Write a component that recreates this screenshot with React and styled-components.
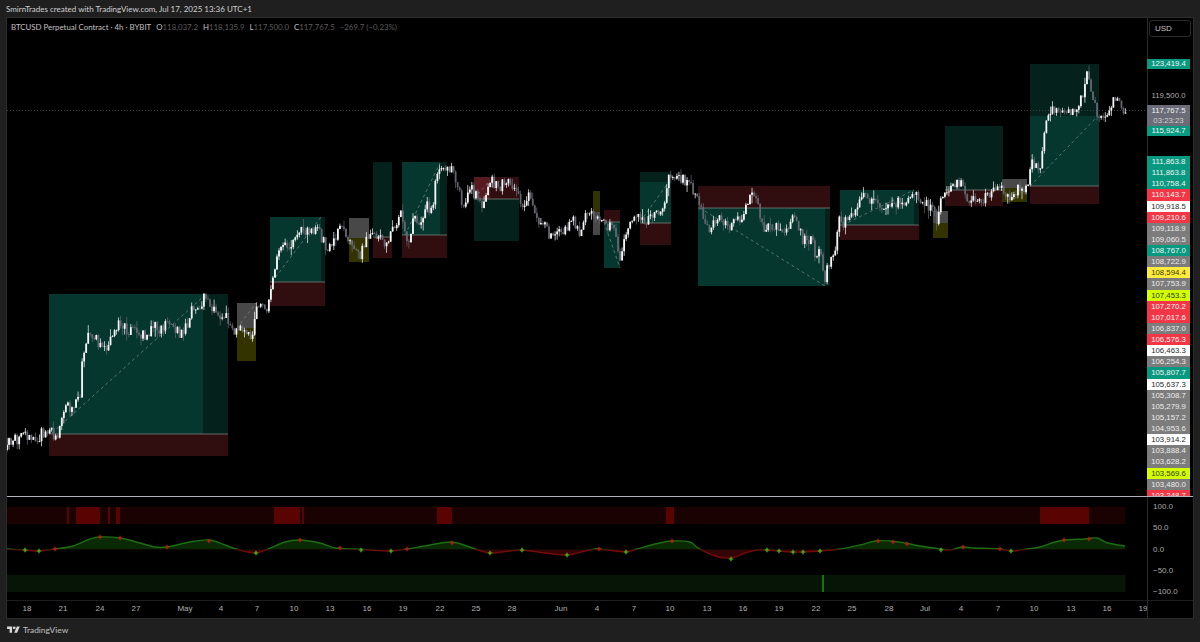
import React, { useMemo } from 'react';
import styled, { createGlobalStyle } from 'styled-components';

const GlobalStyle = createGlobalStyle`
	html, body {
		margin: 0;
		padding: 0;
		background: #1f1f1f;
	}
`;

const Page = styled.div`
	width: 1200px;
	height: 642px;
	display: flex;
	flex-direction: column;
	overflow: hidden;
	background: #1f1f1f;
	font-family: Lato, "Liberation Sans", sans-serif;
`;

const Header = styled.div`
	height: 17px;
	line-height: 18px;
	padding-left: 6px;
	font-size: 8px;
	color: #d0d0d0;
	white-space: nowrap;
`;

const Frame = styled.div`
	width: 1186px;
	margin-left: 6px;
	border: 1px solid #2c2c2c;
	display: grid;
	grid-template-columns: 1140px 46px;
	grid-template-rows: 478px 1px 104px 17px;
	background: #000;
`;

const PricePane = styled.div`
	position: relative;
	height: 478px;
	overflow: hidden;
`;

const Legend = styled.div`
	position: absolute;
	left: 4px;
	top: 3px;
	display: flex;
	gap: 5px;
	font-size: 7.85px;
	line-height: 12px;
	color: #c0c0c0;
	white-space: nowrap;
`;

const Ohlc = styled.span`
	color: #c0c0c0;
`;

const Dim = styled.span`
	color: #5c5c5c;
`;

const PriceScale = styled.div`
	display: flex;
	flex-direction: column;
	height: 478px;
	overflow: hidden;
	box-shadow: inset 1px 0 0 #2a2a2a;
`;

const CurrencyButton = styled.div`
	flex: none;
	width: 42px;
	height: 17px;
	margin: 2px 0 0 2px;
	box-sizing: border-box;
	border: 1px solid #2b2b2b;
	border-radius: 3px;
	padding-left: 5px;
	font-family: "Liberation Sans", sans-serif;
	font-size: 8px;
	line-height: 15px;
	color: #c4c4c4;
`;

const PriceTag = styled.div`
	flex: none;
	width: 43px;
	height: ${(p) => p.$height}px;
	margin-top: ${(p) => p.$gap || 0}px;
	text-align: center;
	font-family: "Liberation Sans", sans-serif;
	font-size: 7.8px;
	line-height: ${(p) => p.$height}px;
	background: ${(p) => p.$bg || 'transparent'};
	color: ${(p) => p.$fg || '#e6e6e6'};
`;

const PriceStack = styled.div`
	flex: none;
	margin-top: 20px;
`;

const CurrentTag = styled.div`
	flex: none;
	width: 43px;
	height: 21px;
	margin-top: 4px;
	background: #6a6d78;
	text-align: center;
	font-family: "Liberation Sans", sans-serif;
	font-size: 7.8px;
	line-height: 10px;
	padding-top: 0.5px;
	box-sizing: border-box;
	color: #f0f0f0;
`;

const Countdown = styled.div`
	color: #d0d0d0;
`;

const Separator = styled.div`
	grid-column: 1 / 3;
	background: #b4b4c0;
`;

const IndicatorPane = styled.div`
	height: 104px;
	border-bottom: 1px solid #1d1d1d;
	box-sizing: border-box;
`;

const IndicatorScale = styled.div`
	border-left: 1px solid #2a2a2a;
	border-bottom: 1px solid #1d1d1d;
	box-sizing: border-box;
	height: 104px;
	padding: 5px 0 3px 5px;
	display: flex;
	flex-direction: column;
	justify-content: space-between;
	font-family: "Liberation Sans", sans-serif;
	font-size: 8px;
	line-height: 10px;
	color: #a8a8a8;
`;

const TimeAxis = styled.div`
	position: relative;
	height: 17px;
	overflow: hidden;
	font-family: "Liberation Sans", sans-serif;
	font-size: 8px;
	line-height: 16px;
	color: #b0b0b0;
`;

const TimeTick = styled.span`
	position: absolute;
	top: 0;
	transform: translateX(-50%);
`;

const AxisCorner = styled.div`
	border-left: 1px solid #2a2a2a;
`;

const Footer = styled.div`
	flex: 1;
	display: flex;
	align-items: center;
	gap: 3px;
	padding: 0 0 2px 7px;
	font-size: 8.4px;
	color: #c0c0c0;
`;

const Svg = styled.svg`
	display: block;
`;

// closing price line, traced by hand in page coordinates
const PRICE_PATH = [
	[7, 450], [10, 440], [17, 440], [23, 435], [35, 442], [43, 432], [52, 433], [58, 443], [63, 407], [70, 408],
	[80, 395], [82, 363], [88, 335], [97, 340], [104, 352], [113, 338], [120, 322], [130, 332], [135, 330], [148, 337],
	[153, 323], [157, 330], [168, 323], [173, 328], [180, 333], [188, 323], [192, 308], [202, 305], [203, 297], [213, 310],
	[230, 320], [235, 332], [243, 330], [252, 335], [257, 307], [267, 307], [272, 282], [280, 242], [290, 245], [303, 230],
	[320, 233], [328, 253], [340, 228], [347, 238], [360, 257], [367, 233], [373, 237], [388, 243], [397, 222], [402, 213],
	[408, 243], [413, 220], [423, 222], [425, 205], [433, 212], [435, 188], [440, 163], [450, 167], [457, 183], [463, 205],
	[470, 187], [483, 207], [490, 180], [500, 187], [507, 177], [517, 190], [522, 207], [530, 190], [537, 220], [542, 217],
	[550, 238], [557, 228], [567, 233], [572, 218], [580, 235], [585, 218], [592, 210], [598, 222], [615, 228], [620, 265],
	[628, 225], [640, 218], [650, 220], [655, 213], [662, 218], [668, 175], [675, 183], [680, 177], [688, 182], [700, 207],
	[710, 230], [717, 215], [728, 228], [737, 220], [745, 213], [751, 190], [757, 202], [763, 230], [777, 225], [787, 232],
	[795, 215], [803, 240], [813, 238], [815, 253], [820, 248], [825, 285], [827, 265], [835, 257], [838, 218], [843, 225],
	[863, 198], [883, 207], [903, 202], [913, 192], [930, 207], [937, 220], [943, 192], [953, 183], [960, 182], [968, 200],
	[990, 197], [997, 183], [1008, 198], [1017, 190], [1028, 188], [1031, 163], [1040, 168], [1047, 118], [1053, 110], [1067, 115],
	[1083, 98], [1086, 68], [1092, 93], [1097, 117], [1103, 122], [1115, 97], [1122, 107], [1126, 111],
];

const TEAL = '#06372f';
const DARK_TEAL = '#04211c';
const RED = '#300e10';
const GREY = '#484848';
const OLIVE = '#333300';

// x, y, width, height, fill
const ZONES = [
	[49, 294, 179, 140, TEAL], [203, 294, 25, 140, DARK_TEAL], [49, 434, 179, 22, RED],
	[237, 303, 19, 25, GREY], [237, 328, 19, 33, OLIVE],
	[270, 217, 55, 65, TEAL], [321, 217, 4, 65, DARK_TEAL], [270, 282, 55, 24, RED],
	[349, 218, 20, 20, GREY], [349, 238, 20, 24, OLIVE],
	[373, 162, 19, 75, DARK_TEAL], [373, 237, 19, 21, RED],
	[402, 162, 45, 73, TEAL], [440, 162, 7, 73, DARK_TEAL], [402, 235, 45, 23, RED],
	[474, 177, 45, 22, RED], [474, 177, 16, 22, '#571a1f'], [474, 199, 45, 42, DARK_TEAL],
	[593, 191, 7, 21, OLIVE], [593, 212, 7, 23, GREY],
	[604, 210, 16, 12, RED], [604, 222, 16, 46, TEAL],
	[640, 172, 31, 10, DARK_TEAL], [640, 182, 31, 41, TEAL], [640, 223, 31, 22, RED],
	[698, 186, 132, 22, RED], [698, 208, 132, 78, TEAL], [825, 208, 5, 78, DARK_TEAL],
	[840, 190, 79, 35, TEAL], [914, 190, 5, 35, DARK_TEAL], [840, 225, 79, 15, RED],
	[933, 211, 15, 12, GREY], [933, 223, 15, 15, OLIVE],
	[945, 126, 58, 64, DARK_TEAL], [945, 190, 58, 16, RED],
	[1002, 179, 25, 9, GREY], [1002, 188, 25, 14, OLIVE],
	[1030, 64, 69, 52, DARK_TEAL], [1030, 116, 69, 70, TEAL], [1030, 186, 69, 18, RED],
];

// x1, x2, y
const ZONE_EDGES = [
	[49, 228, 434], [270, 325, 282], [402, 447, 235], [373, 392, 237], [474, 519, 199], [604, 620, 222],
	[640, 671, 223], [698, 830, 208], [840, 919, 225], [945, 1003, 190], [1030, 1099, 186],
];

const DASHES = [
	[52, 433, 203, 297], [237, 328, 256, 303], [272, 282, 321, 217], [405, 235, 440, 163], [474, 199, 490, 180],
	[604, 222, 620, 268], [640, 222, 668, 183], [700, 208, 825, 286], [843, 225, 914, 190], [1030, 186, 1097, 117],
];

const RED_BARS = [[67, 2], [76, 24], [108, 2], [116, 4], [274, 26], [302, 2], [437, 15], [666, 8], [1040, 49]];

const OSC_PATH = [
	[7, 549], [25, 550], [39, 551], [55, 549], [73, 546], [90, 539], [100, 537], [120, 538], [140, 543], [155, 547],
	[167, 547], [190, 542], [209, 540], [225, 545], [236, 549], [255, 553], [268, 549], [285, 542], [300, 540], [320, 543],
	[335, 548], [355, 549], [370, 550], [390, 551], [407, 549], [425, 546], [452, 542], [475, 549], [490, 553], [510, 551],
	[522, 550], [545, 553], [567, 555], [585, 551], [595, 549], [600, 549], [625, 552], [637, 549], [655, 544], [672, 541],
	[690, 542], [698, 548], [715, 556], [731, 558], [745, 553], [757, 550], [767, 550], [792, 552], [803, 552], [820, 551],
	[840, 549], [860, 545], [875, 541], [890, 541], [905, 543], [920, 546], [940, 549], [950, 550], [962, 547], [975, 548],
	[1000, 549], [1012, 551], [1027, 549], [1040, 547], [1055, 542], [1065, 540], [1085, 539], [1097, 538], [1108, 543], [1125, 546],
];

const RED_MARKS = [
	[55, 549], [100, 537], [120, 538], [167, 547], [209, 541], [300, 540], [340, 548], [407, 549], [452, 543], [599, 549],
	[672, 541], [878, 541], [893, 542], [907, 544], [963, 547], [1000, 549], [1064, 540], [1089, 539],
];

const GREEN_MARKS = [
	[25, 550], [39, 551], [256, 553], [361, 550], [391, 551], [490, 553], [522, 550], [567, 555], [626, 552], [731, 559],
	[767, 550], [779, 551], [793, 552], [803, 552], [820, 551], [941, 550], [1011, 551],
];

const UPPER_STACK = [
	['111,863.8', 'teal'], ['111,863.8', 'teal'], ['110,758.4', 'teal'], ['110,143.7', 'red'], ['109,918.5', 'white'],
	['109,210.6', 'red'], ['109,118.9', 'grey'], ['109,060.5', 'grey'], ['108,767.0', 'teal'], ['108,722.9', 'grey'],
	['108,594.4', 'yellow'], ['107,753.9', 'grey'], ['107,453.3', 'lime'], ['107,270.2', 'red'], ['107,017.6', 'red'],
	['106,837.0', 'grey'], ['106,576.3', 'red'], ['106,463.3', 'white'], ['106,254.3', 'grey'], ['105,807.7', 'teal'],
	['105,637.3', 'white'], ['105,308.7', 'grey'], ['105,279.9', 'grey'], ['105,157.2', 'grey'], ['104,953.6', 'grey'],
	['103,914.2', 'white'], ['103,888.4', 'grey'], ['103,628.2', 'grey'], ['103,569.6', 'lime'], ['103,480.0', 'grey'],
	['103,248.7', 'red'],
];

const TAG_COLORS = {
	teal: ['#089981', '#f2f2f2'],
	red: ['#f23645', '#f6f6f6'],
	white: ['#ffffff', '#2a2a2a'],
	grey: ['#7c7c7c', '#ececec'],
	yellow: ['#ffeb3b', '#3a3a10'],
	lime: ['#d4ff00', '#30380a'],
};

const TIME_TICKS = [
	['18', 27], ['21', 63], ['24', 100], ['27', 136], ['May', 185], ['4', 221], ['7', 257], ['10', 294], ['13', 330], ['16', 367],
	['19', 403], ['22', 440], ['25', 476], ['28', 512], ['Jun', 561], ['4', 597], ['7', 634], ['10', 670], ['13', 707], ['16', 743],
	['19', 779], ['22', 816], ['25', 852], ['28', 889], ['Jul', 925], ['4', 961], ['7', 998], ['10', 1034], ['13', 1071], ['16', 1107],
	['19', 1143],
];

function priceAt(x) {
	for (let i = 1; i < PRICE_PATH.length; i++) {
		const [x0, y0] = PRICE_PATH[i - 1];
		const [x1, y1] = PRICE_PATH[i];
		if (x <= x1) return y0 + ((y1 - y0) * (x - x0)) / (x1 - x0);
	}
	return PRICE_PATH[PRICE_PATH.length - 1][1];
}

function buildCandles() {
	let seed = 4211;
	const rnd = () => {
		seed = (seed * 16807) % 2147483647;
		return seed / 2147483647;
	};
	const out = [];
	let prev = priceAt(7);
	for (let x = 7; x <= 1126; x += 2.03) {
		const close = priceAt(x) + (rnd() - 0.5) * 11;
		const top = Math.min(prev, close) - rnd() * rnd() * 9;
		const bottom = Math.max(prev, close) + rnd() * rnd() * 9;
		out.push({ x, open: prev, close, top, bottom });
		prev = close;
	}
	return out;
}

function smoothPath(points) {
	let d = `M${points[0][0]} ${points[0][1]}`;
	for (let i = 0; i < points.length - 1; i++) {
		const p0 = points[i - 1] || points[i];
		const p1 = points[i];
		const p2 = points[i + 1];
		const p3 = points[i + 2] || p2;
		const c1x = p1[0] + (p2[0] - p0[0]) / 6;
		const c1y = p1[1] + (p2[1] - p0[1]) / 6;
		const c2x = p2[0] - (p3[0] - p1[0]) / 6;
		const c2y = p2[1] - (p3[1] - p1[1]) / 6;
		d += `C${c1x.toFixed(1)} ${c1y.toFixed(1)} ${c2x.toFixed(1)} ${c2y.toFixed(1)} ${p2[0]} ${p2[1]}`;
	}
	return d;
}

function Candles() {
	const candles = useMemo(buildCandles, []);
	return candles.map((c) => {
		const up = c.close <= c.open;
		const color = up ? '#f8f8f8' : '#63666f';
		return (
			<g key={c.x} fill={color}>
				<rect x={c.x - 0.35} y={c.top} width={0.7} height={c.bottom - c.top} />
				<rect x={c.x - 0.9} y={Math.min(c.open, c.close)} width={1.8} height={Math.max(Math.abs(c.close - c.open), 0.8)} />
			</g>
		);
	});
}

function PriceChart() {
	return (
		<Svg width="1140" height="478" viewBox="7 18 1140 478">
			{ZONES.map(([x, y, w, h, fill], i) => (
				<rect key={i} x={x} y={y} width={w} height={h} fill={fill} />
			))}
			{ZONE_EDGES.map(([x1, x2, y], i) => (
				<line key={i} x1={x1} x2={x2} y1={y} y2={y} stroke="#74807c" strokeWidth="0.8" />
			))}
			<line x1="7" x2="1147" y1="110.5" y2="110.5" stroke="#4c4c4c" strokeWidth="0.8" strokeDasharray="1 2" />
			{DASHES.map(([x1, y1, x2, y2], i) => (
				<line key={i} x1={x1} y1={y1} x2={x2} y2={y2} stroke="#7d8a86" strokeWidth="0.7" strokeDasharray="3 3" />
			))}
			<Candles />
		</Svg>
	);
}

function Cross({ x, y, color }) {
	return (
		<path d={`M${x - 2.2} ${y}H${x + 2.2}M${x} ${y - 2.2}V${y + 2.2}`} stroke={color} strokeWidth="1.2" fill="none" />
	);
}

function IndicatorChart() {
	const line = smoothPath(OSC_PATH);
	const area = `${line}L1125 549.5L7 549.5Z`;
	return (
		<Svg width="1140" height="103" viewBox="7 497 1140 103">
			<defs>
				<clipPath id="above">
					<rect x="0" y="497" width="1200" height="52.5" />
				</clipPath>
				<clipPath id="below">
					<rect x="0" y="549.5" width="1200" height="52" />
				</clipPath>
			</defs>
			<rect x="7" y="507" width="1118.5" height="17" fill="#1a0102" />
			{RED_BARS.map(([x, w]) => (
				<rect key={x} x={x} y="507" width={w} height="17" fill="#5a0303" />
			))}
			<g clipPath="url(#above)">
				<path d={area} fill="#0a2a06" />
				<path d={line} fill="none" stroke="#1c6e10" strokeWidth="1.4" />
			</g>
			<g clipPath="url(#below)">
				<path d={area} fill="#350404" />
				<path d={line} fill="none" stroke="#740a0a" strokeWidth="1.4" />
			</g>
			{RED_MARKS.map(([x, y]) => (
				<Cross key={x} x={x} y={y} color="#c81a0c" />
			))}
			{GREEN_MARKS.map(([x, y]) => (
				<Cross key={x} x={x} y={y} color="#46c812" />
			))}
			<rect x="7" y="575" width="1118.5" height="17" fill="#061505" />
			<rect x="822" y="575" width="2" height="17" fill="#1c6e10" />
		</Svg>
	);
}

function TradingViewLogo() {
	return (
		<svg width="13" height="10" viewBox="0 0 36 28" fill="#d8d8d8">
			<path d="M14 22H7V11H0V4h14v18z" />
			<path d="M28 22h-8l7.5-18h8L28 22z" />
			<circle cx="20" cy="8" r="4" />
		</svg>
	);
}

function Tag({ value, kind }) {
	const [bg, fg] = TAG_COLORS[kind];
	return <PriceTag $height={11.13} $bg={bg} $fg={fg}>{value}</PriceTag>;
}

export default function App() {
	return (
		<Page>
			<GlobalStyle />
			<Header>SmirnTrades created with TradingView.com, Jul 17, 2025 13:36 UTC+1</Header>
			<Frame>
				<PricePane>
					<PriceChart />
					<Legend>
						<span>BTCUSD Perpetual Contract · 4h · BYBIT</span>
						<Ohlc>O<Dim>118,037.2</Dim></Ohlc>
						<Ohlc>H<Dim>118,135.9</Dim></Ohlc>
						<Ohlc>L<Dim>117,500.0</Dim></Ohlc>
						<Ohlc>C<Dim>117,767.5</Dim></Ohlc>
						<Dim>−269.7 (−0.23%)</Dim>
					</Legend>
				</PricePane>
				<PriceScale>
					<CurrencyButton>USD</CurrencyButton>
					<PriceTag $height={10} $gap={22} $bg="#089981" $fg="#f2f2f2">123,419.4</PriceTag>
					<PriceTag $height={10} $gap={22} $fg="#a8a8a8">119,500.0</PriceTag>
					<CurrentTag>
						117,767.5
						<Countdown>03:23:23</Countdown>
					</CurrentTag>
					<PriceTag $height={10} $bg="#089981" $fg="#f2f2f2">115,924.7</PriceTag>
					<PriceStack>
						{UPPER_STACK.map(([value, kind], i) => (
							<Tag key={i} value={value} kind={kind} />
						))}
					</PriceStack>
				</PriceScale>
				<Separator />
				<IndicatorPane>
					<IndicatorChart />
				</IndicatorPane>
				<IndicatorScale>
					<span>100.0</span>
					<span>50.0</span>
					<span>0.0</span>
					<span>−50.0</span>
					<span>−100.0</span>
				</IndicatorScale>
				<TimeAxis>
					{TIME_TICKS.map(([label, x], i) => (
						<TimeTick key={i} style={{ left: x - 7 }}>{label}</TimeTick>
					))}
				</TimeAxis>
				<AxisCorner />
			</Frame>
			<Footer>
				<TradingViewLogo />
				TradingView
			</Footer>
		</Page>
	);
}
